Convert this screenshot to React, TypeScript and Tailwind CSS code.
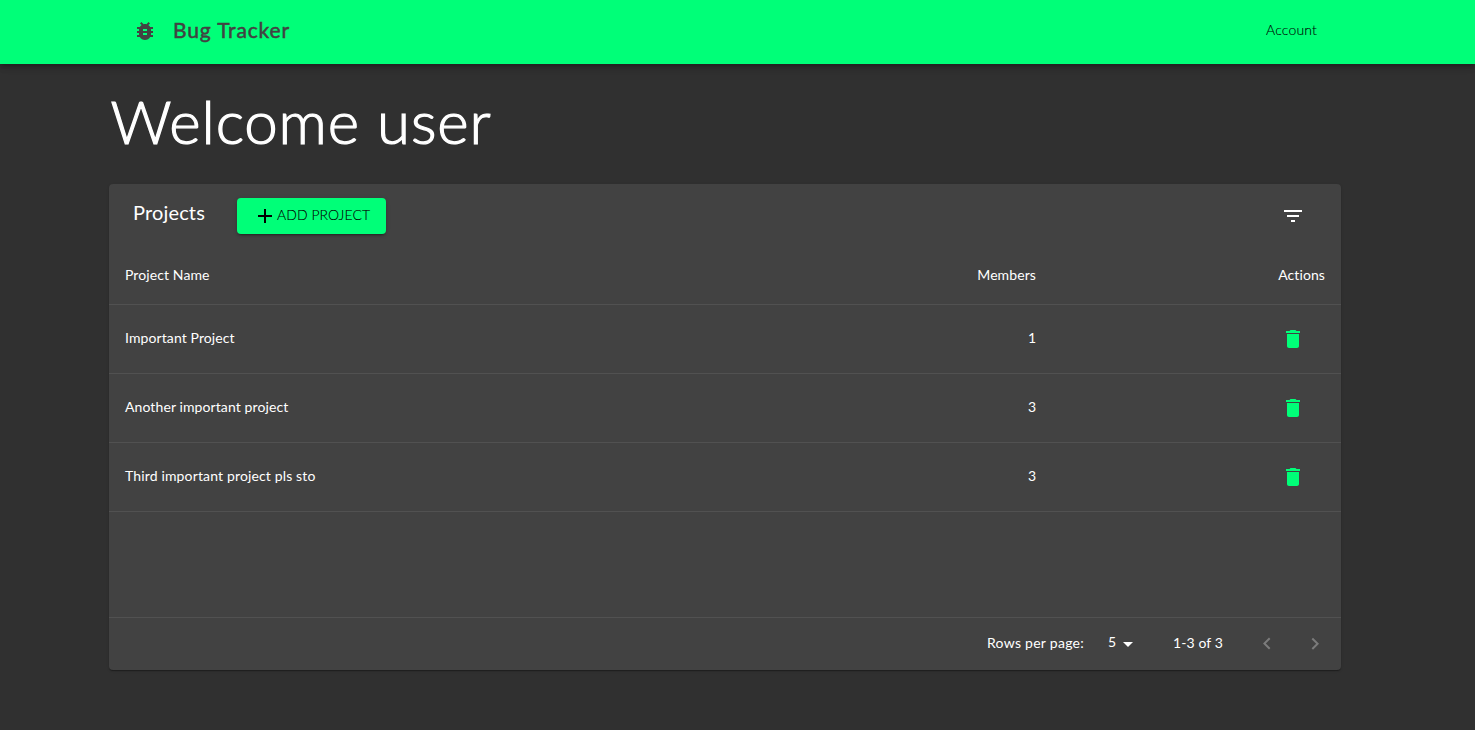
import type { ReactNode } from "react";

function Icon({ d, className = "" }: { d: string; className?: string }) {
  return (
    <svg viewBox="0 0 24 24" className={`size-6 shrink-0 fill-current ${className}`} aria-hidden="true">
      <path d={d} />
    </svg>
  );
}

const BUG =
  "M20 8h-2.81c-.45-.78-1.07-1.45-1.82-1.96L17 4.41 15.59 3l-2.17 2.17C12.96 5.06 12.49 5 12 5c-.49 0-.96.06-1.41.17L8.41 3 7 4.41l1.62 1.63C7.88 6.55 7.26 7.22 6.81 8H4v2h2.09c-.05.33-.09.66-.09 1v1H4v2h2v1c0 .34.04.67.09 1H4v2h2.81c1.04 1.79 2.97 3 5.19 3s4.15-1.21 5.19-3H20v-2h-2.09c.05-.33.09-.66.09-1v-1h2v-2h-2v-1c0-.34-.04-.67-.09-1H20V8zm-6 8h-4v-2h4v2zm0-4h-4v-2h4v2z";
const ADD = "M19 13h-6v6h-2v-6H5v-2h6V5h2v6h6v2z";
const FILTER = "M10 18h4v-2h-4v2zM3 6v2h18V6H3zm3 7h12v-2H6v2z";
const TRASH = "M6 19c0 1.1.9 2 2 2h8c1.1 0 2-.9 2-2V7H6v12zM19 4h-3.5l-1-1h-5l-1 1H5v2h14V4z";
const DROPDOWN = "M7 10l5 5 5-5z";
const LEFT = "M15.41 16.09l-4.58-4.59 4.58-4.59L14 5.5l-6 6 6 6z";
const RIGHT = "M8.59 16.34l4.58-4.59-4.58-4.59L10 5.75l6 6-6 6z";

const projects = [
  { name: "Important Project", members: 1, spacing: "tracking-[0.1px]" },
  { name: "Another important project", members: 3, spacing: "tracking-[0.1px]" },
  { name: "Third important project pls sto", members: 3, spacing: "tracking-[0.145px]" },
];

function Row({ children, className = "" }: { children: ReactNode; className?: string }) {
  return (
    <div className={`grid grid-cols-[1fr_240px_289px] items-center border-b border-[#515151] px-4 ${className}`}>
      {children}
    </div>
  );
}

export default function App() {
  return (
    <div className="min-h-screen bg-[#303030] font-['Lato','Open_Sans',sans-serif] text-sm leading-5 text-white">
      <header className="relative flex h-16 items-center bg-[#00ff78] pr-[158px] pl-[133px] text-[#424242] shadow-[0px_2px_4px_-1px_rgba(0,0,0,0.2),0px_4px_5px_0px_rgba(0,0,0,0.14),0px_1px_10px_0px_rgba(0,0,0,0.12)]">
        <Icon d={BUG} className="mt-[-2px]" />
        <span className="mt-[-5px] ml-[16px] text-[21px] font-normal tracking-[0.85px] [-webkit-text-stroke:0.5px_#424242]">Bug Tracker</span>
        <span className="mt-[-5px] ml-auto font-light tracking-[0.15px] text-black [-webkit-text-stroke:0.1px_#000]">Account</span>
      </header>

      <main className="pr-[134px] pl-[109px]">
        <h1 className="flex h-[120px] items-center pb-[7px] pl-[1.5px] text-[60px] leading-[72px] font-light tracking-[0.87px] [-webkit-text-stroke:1.2px_#fff]">
          Welcome user
        </h1>

        <section className="flex h-[486px] flex-col rounded bg-[#424242] shadow-[0px_2px_1px_-1px_rgba(0,0,0,0.2),0px_1px_1px_0px_rgba(0,0,0,0.14),0px_1px_3px_0px_rgba(0,0,0,0.12)]">
          <div className="flex h-16 items-center pr-9 pl-6">
            <h2 className="mt-[-8px] w-[104px] text-xl tracking-[0.15px]">Projects</h2>
            <button className="flex h-9 w-[149px] items-center rounded bg-[#00ff78] pl-4 font-light text-black shadow-[0px_3px_1px_-2px_rgba(0,0,0,0.2),0px_2px_2px_0px_rgba(0,0,0,0.14),0px_1px_5px_0px_rgba(0,0,0,0.12)]">
              <Icon d={ADD} />
              <span className="mt-[-3px] whitespace-nowrap tracking-[0.05px] [-webkit-text-stroke:0.1px_#000]">ADD PROJECT</span>
            </button>
            <Icon d={FILTER} className="ml-auto" />
          </div>

          <Row className="h-[57px]">
            <span className="pb-0.5 tracking-[0.1px]">Project Name</span>
            <span className="pb-0.5 text-right tracking-[0.1px]">Members</span>
            <span className="pb-0.5 text-right tracking-[0.1px]">Actions</span>
          </Row>
          {projects.map((p) => (
            <Row key={p.name} className="h-[69px]">
              <span className={`pb-0.5 ${p.spacing}`}>{p.name}</span>
              <span className="pb-0.5 text-right">{p.members}</span>
              <span className="flex justify-end pr-5 text-[#00ff78]">
                <Icon d={TRASH} />
              </span>
            </Row>
          ))}

          <div className="h-[106px] shrink-0 border-b border-[#515151]" />
          <footer className="flex h-[52px] items-center">
            <span className="ml-[878px] w-[121px] pb-0.5 tracking-[0.27px]">Rows per page:</span>
            <span className="w-2 pb-1">5</span>
            <Icon d={DROPDOWN} />
            <span className="ml-[33px] w-[82px] pb-0.5 tracking-[0.1px]">1-3 of 3</span>
            <span className="flex gap-6 text-[#7b7b7b]">
              <Icon d={LEFT} />
              <Icon d={RIGHT} />
            </span>
          </footer>
        </section>
      </main>
    </div>
  );
}
